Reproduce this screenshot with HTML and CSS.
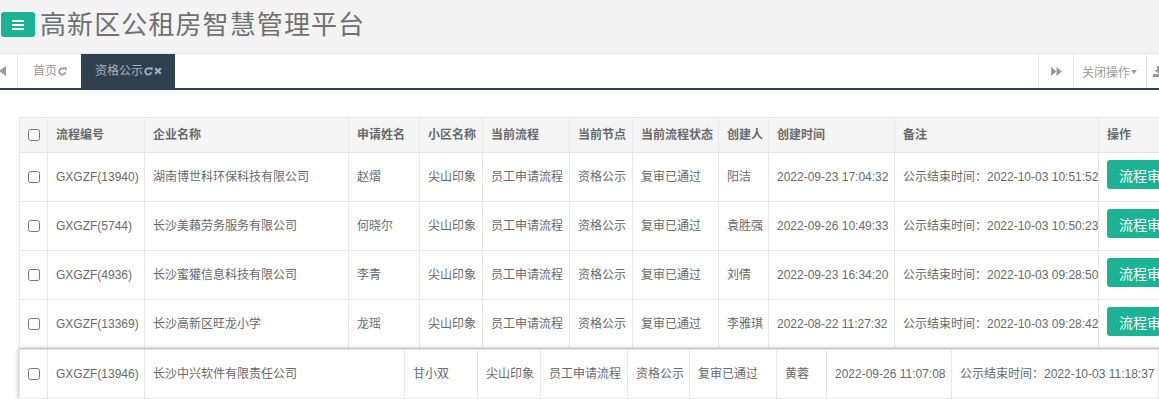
FILE: index.html
```html
<!DOCTYPE html>
<html lang="zh-CN">

<head>
    <meta charset="UTF-8">
    <meta name="viewport" content="width=device-width, initial-scale=1.0">
    <title>高新区公租房智慧管理平台</title>
    <link rel="stylesheet" href="styles.css">
</head>

<body>
    <div class="header">
        <a class="menu-btn" href="#">
            <svg width="12" height="10" viewBox="0 0 12 10">
                <rect x="0" y="0" width="12" height="2" fill="#fff" />
                <rect x="0" y="4" width="12" height="2" fill="#fff" />
                <rect x="0" y="8" width="12" height="2" fill="#fff" />
            </svg>
        </a>
        <h1 class="title">高新区公租房智慧管理平台</h1>
    </div>

    <div class="tabs-bar">
        <button class="roll-left">
            <svg width="16" height="10" viewBox="0 0 16 10">
                <polygon points="8,0 8,10 1,5" fill="#999" />
                <polygon points="15,0 15,10 8,5" fill="#999" />
            </svg>
        </button>
        <nav class="page-tabs">
            <a class="tab" href="#">首页<svg class="ico" width="9" height="9" viewBox="0 0 16 16">
                    <path d="M13 9.5A5.5 5.5 0 1 1 11.2 3.8" fill="none" stroke="currentColor" stroke-width="3.2" />
                    <polygon points="9,1 15.5,0.5 15,7" fill="currentColor" />
                </svg></a>
            <a class="tab active" href="#">资格公示<svg class="ico" width="9" height="9" viewBox="0 0 16 16">
                    <path d="M13 9.5A5.5 5.5 0 1 1 11.2 3.8" fill="none" stroke="currentColor" stroke-width="3.2" />
                    <polygon points="9,1 15.5,0.5 15,7" fill="currentColor" />
                </svg><svg class="ico close" width="8" height="8" viewBox="0 0 10 10">
                    <path d="M1.5 1.5L8.5 8.5M8.5 1.5L1.5 8.5" stroke="currentColor" stroke-width="2.6" />
                </svg></a>
        </nav>
        <div class="tabs-right">
            <button class="roll-right">
                <svg width="11" height="9" viewBox="0 0 12 10">
                    <polygon points="0,0 0,10 6,5" fill="#999" />
                    <polygon points="6,0 6,10 12,5" fill="#999" />
                </svg>
            </button>
            <button class="tab-menu">关闭操作<span class="caret"></span></button>
            <button class="tab-exit">
                <svg width="12" height="11" viewBox="0 0 12 11">
                    <rect x="4" y="0" width="4" height="5" fill="#999" />
                    <polygon points="1,4 11,4 6,8" fill="#999" />
                    <rect x="0" y="8" width="12" height="3" fill="#999" />
                </svg>
            </button>
        </div>
    </div>

    <div class="content">
        <table class="grid">
            <colgroup>
                <col style="width:28px">
                <col style="width:97px">
                <col style="width:204px">
                <col style="width:71px">
                <col style="width:63px">
                <col style="width:87px">
                <col style="width:63px">
                <col style="width:86px">
                <col style="width:50px">
                <col style="width:126px">
                <col style="width:204px">
                <col style="width:100px">
            </colgroup>
            <thead>
                <tr>
                    <th class="chk"><input type="checkbox"></th>
                    <th>流程编号</th>
                    <th>企业名称</th>
                    <th>申请姓名</th>
                    <th>小区名称</th>
                    <th>当前流程</th>
                    <th>当前节点</th>
                    <th>当前流程状态</th>
                    <th>创建人</th>
                    <th>创建时间</th>
                    <th>备注</th>
                    <th>操作</th>
                </tr>
            </thead>
            <tbody>
                <tr>
                    <td class="chk"><input type="checkbox"></td>
                    <td>GXGZF(13940)</td>
                    <td>湖南博世科环保科技有限公司</td>
                    <td>赵熠</td>
                    <td>尖山印象</td>
                    <td>员工申请流程</td>
                    <td>资格公示</td>
                    <td>复审已通过</td>
                    <td>阳洁</td>
                    <td>2022-09-23 17:04:32</td>
                    <td>公示结束时间：2022-10-03 10:51:52</td>
                    <td class="op"><button class="btn-audit">流程审核</button></td>
                </tr>
                <tr>
                    <td class="chk"><input type="checkbox"></td>
                    <td>GXGZF(5744)</td>
                    <td>长沙美藾劳务服务有限公司</td>
                    <td>何晓尔</td>
                    <td>尖山印象</td>
                    <td>员工申请流程</td>
                    <td>资格公示</td>
                    <td>复审已通过</td>
                    <td>袁胜强</td>
                    <td>2022-09-26 10:49:33</td>
                    <td>公示结束时间：2022-10-03 10:50:23</td>
                    <td class="op"><button class="btn-audit">流程审核</button></td>
                </tr>
                <tr>
                    <td class="chk"><input type="checkbox"></td>
                    <td>GXGZF(4936)</td>
                    <td>长沙蜜獾信息科技有限公司</td>
                    <td>李青</td>
                    <td>尖山印象</td>
                    <td>员工申请流程</td>
                    <td>资格公示</td>
                    <td>复审已通过</td>
                    <td>刘倩</td>
                    <td>2022-09-23 16:34:20</td>
                    <td>公示结束时间：2022-10-03 09:28:50</td>
                    <td class="op"><button class="btn-audit">流程审核</button></td>
                </tr>
                <tr>
                    <td class="chk"><input type="checkbox"></td>
                    <td>GXGZF(13369)</td>
                    <td>长沙高新区旺龙小学</td>
                    <td>龙瑶</td>
                    <td>尖山印象</td>
                    <td>员工申请流程</td>
                    <td>资格公示</td>
                    <td>复审已通过</td>
                    <td>李雅琪</td>
                    <td>2022-08-22 11:27:32</td>
                    <td>公示结束时间：2022-10-03 09:28:42</td>
                    <td class="op"><button class="btn-audit">流程审核</button></td>
                </tr>
            </tbody>
        </table>

        <!-- 拖动中的行 -->
        <table class="grid drag-row">
            <colgroup>
                <col style="width:28px">
                <col style="width:97px">
                <col style="width:260px">
                <col style="width:73px">
                <col style="width:63px">
                <col style="width:87px">
                <col style="width:62px">
                <col style="width:87px">
                <col style="width:50px">
                <col style="width:125px">
                <col style="width:207px">
                <col style="width:100px">
            </colgroup>
            <tr>
                <td class="chk"><input type="checkbox"></td>
                <td>GXGZF(13946)</td>
                <td>长沙中兴软件有限责任公司</td>
                <td>甘小双</td>
                <td>尖山印象</td>
                <td>员工申请流程</td>
                <td>资格公示</td>
                <td>复审已通过</td>
                <td>黄蓉</td>
                <td>2022-09-26 11:07:08</td>
                <td>公示结束时间：2022-10-03 11:18:37</td>
                <td></td>
            </tr>
        </table>
    </div>
</body>

</html>
```

FILE: styles.css
```css
* {
    margin: 0;
    padding: 0;
    box-sizing: border-box;
}

html,
body {
    overflow: hidden;
}

body {
    width: 1159px;
    height: 399px;
    background-color: #fff;
    font-family: "Liberation Sans", "Noto Sans CJK SC", sans-serif;
    font-size: 12px;
    color: #676a6c;
}

/* 顶部标题栏 */
.header {
    display: flex;
    align-items: center;
    height: 54px;
    padding-bottom: 4px;
    background-color: #f3f3f4;
    border-bottom: 1px solid #e7e7e7;
}

.menu-btn {
    display: flex;
    align-items: center;
    justify-content: center;
    width: 34px;
    height: 25px;
    margin-left: 1px;
    margin-right: 5px;
    background-color: #1ab394;
    border-radius: 3px;
}

.title {
    font-size: 26px;
    font-weight: normal;
    line-height: 30px;
    color: #707070;
    letter-spacing: 1.1px;
}

/* 标签栏，右侧按钮超出窗口 */
.tabs-bar {
    display: flex;
    width: 1186px;
    height: 36px;
    background-color: #fff;
    border-bottom: 2px solid #2f4050;
}

.tabs-bar button {
    border: none;
    background: #fff;
    font-family: inherit;
    font-size: 12px;
    color: #999;
    cursor: pointer;
}

.roll-left {
    display: flex;
    align-items: center;
    width: 18px;
    overflow: hidden;
    border-right: 1px solid #e7e7e7 !important;
}

.roll-left svg {
    margin-left: -9px;
    flex-shrink: 0;
}

.page-tabs {
    display: flex;
    flex: 1;
}

.tab {
    display: flex;
    align-items: center;
    padding: 0 14px 0 15px;
    color: #999;
    text-decoration: none;
    line-height: 34px;
}

.tab.active {
    padding: 0 13px 0 14px;
    background-color: #2f4050;
    color: #a7b1c2;
}

.ico {
    margin-left: 1px;
}

.ico.close {
    margin-left: 1px;
}

.tabs-right {
    display: flex;
}

.roll-right {
    display: flex;
    align-items: center;
    justify-content: center;
    width: 35px;
    border-left: 1px solid #e7e7e7 !important;
}

.tab-menu {
    display: flex;
    align-items: center;
    width: 73px;
    padding-left: 8px;
    border-left: 1px solid #e7e7e7 !important;
}

.caret {
    display: inline-block;
    margin-left: 1px;
    margin-top: 2px;
    border-top: 4px solid #999;
    border-left: 3px solid transparent;
    border-right: 3px solid transparent;
}

.tab-exit {
    display: flex;
    align-items: center;
    width: 40px;
    padding-left: 6px;
    border-left: 1px solid #e7e7e7 !important;
}

/* 内容区 */
.content {
    position: relative;
    padding: 27px 0 0 19px;
}

.grid {
    table-layout: fixed;
    width: 1179px;
    border-collapse: collapse;
    border: 1px solid #e7e7e7;
}

.grid th,
.grid td {
    border: 1px solid #e7e7e7;
    padding: 0 8px;
    text-align: left;
    white-space: nowrap;
    overflow: hidden;
    line-height: 17px;
}

.grid th {
    height: 35px;
    background-color: #f5f5f6;
    font-weight: bold;
}

.grid td {
    height: 49px;
    vertical-align: middle;
}

.grid .chk {
    padding: 0 0 0 1px;
    text-align: center;
}

.chk input {
    width: 12px;
    height: 12px;
    margin: 0;
    vertical-align: middle;
}

.grid td.op {
    vertical-align: top;
    padding-top: 7px;
}

.btn-audit {
    height: 29px;
    padding: 0 12px;
    border: none;
    border-radius: 3px;
    background-color: #1ab394;
    color: #fff;
    font-family: inherit;
    font-size: 14px;
    white-space: nowrap;
}

/* 拖动中的行，浮在表格之上 */
.drag-row {
    position: absolute;
    top: 259px;
    left: 19px;
    width: 1239px;
    background-color: #fff;
    box-shadow: 0 0 5px rgba(0, 0, 0, 0.35);
}
```
